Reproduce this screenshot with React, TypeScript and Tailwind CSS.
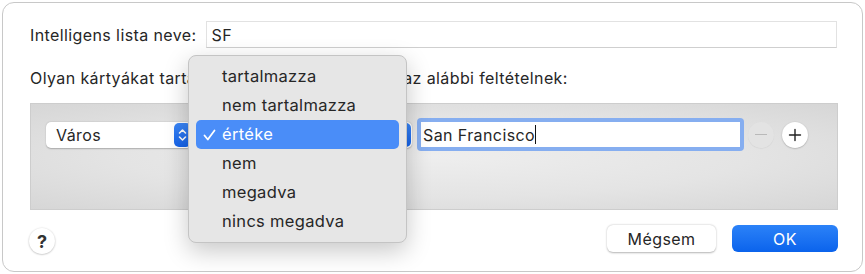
import React from "react";

const menuItems = ["tartalmazza", "nem tartalmazza", "értéke", "nem", "megadva", "nincs megadva"];

function Stepper() {
  return (
    <div className="w-[17px] h-[24px] rounded-[5px] bg-gradient-to-b from-[#3b86f7] to-[#1463ea] flex items-center justify-center">
      <svg width="9" height="14" viewBox="0 0 9 14" fill="none" stroke="white" strokeWidth="1.6" strokeLinecap="round" strokeLinejoin="round">
        <path d="M1.5 5 L4.5 2 L7.5 5" />
        <path d="M1.5 9 L4.5 12 L7.5 9" />
      </svg>
    </div>
  );
}

export default function App() {
  return (
    <div
      className="w-[865px] h-[274px] bg-white p-[2px] text-[#262626] text-[16px] tracking-[0.4px]"
      style={{ fontFamily: "Inter, 'Noto Sans', sans-serif" }}
    >
      <div className="relative h-[270px] rounded-[12px] border border-[#c8c8c8] bg-white pl-[27px] pr-[25px] pt-[18px]">
        {/* name row */}
        <div className="flex items-center">
          <span className="leading-5 mr-[9px]">Intelligens lista neve:</span>
          <div className="flex-1 h-[27px] border border-[#e2e2e2] border-b-[#cfcfcf] bg-white flex items-center px-[5px]">
            SF
          </div>
        </div>

        <p className="mt-[20px] leading-5">
          Olyan kártyákat tart
          <span className="tracking-[-0.08px]">almaz, amelyek megfelelnek </span>
          az alábbi feltételnek:
        </p>

        {/* criteria box */}
        <div className="mt-[15px] h-[107px] mr-[-1px] border border-[#cdcdcd] bg-[radial-gradient(ellipse_at_center,#eeeeee_0%,#e4e4e4_55%,#d6d6d6_100%)] pl-[15px] pt-[14px]">
          <div className="flex items-center">
            <div className="w-[146px] h-[26px] rounded-[5px] bg-white shadow-[0_0.5px_1.5px_rgba(0,0,0,0.25)] flex items-center justify-between pl-[10px] pr-[1px]">
              <span>Város</span>
              <Stepper />
            </div>
            <div className="ml-[6px] w-[214px] h-[26px] rounded-[5px] bg-white shadow-[0_0.5px_1.5px_rgba(0,0,0,0.25)] flex items-center justify-end pr-[1px]">
              <Stepper />
            </div>
            <div className="ml-[5px] w-[327px] h-[33px] rounded-[4px] bg-[#86aef0] p-[4px]">
              <div className="h-full bg-white flex items-center pl-[2px]">
                San Francisco
                <span className="inline-block w-px h-[19px] bg-[#111]" />
              </div>
            </div>
            <div className="ml-[4px] w-[26px] h-[26px] rounded-full bg-[#e3e3e3] shadow-[0_0.5px_1px_rgba(0,0,0,0.08)] flex items-center justify-center">
              <span className="block w-[12px] h-[1.5px] bg-[#b9b9b9]" />
            </div>
            <div className="ml-[8px] w-[26px] h-[26px] rounded-full bg-white shadow-[0_0.5px_1.5px_rgba(0,0,0,0.3)] flex items-center justify-center">
              <svg width="14" height="14" viewBox="0 0 14 14" stroke="#222" strokeWidth="1.4" strokeLinecap="round">
                <path d="M7 1.5 V12.5 M1.5 7 H12.5" />
              </svg>
            </div>
          </div>
        </div>

        {/* bottom buttons */}
        <div className="mt-[13px] flex items-center">
          <div className="ml-[-1px] mt-[5px] w-[26px] h-[26px] rounded-full bg-white shadow-[0_0.5px_2px_rgba(0,0,0,0.3)] flex items-center justify-center text-[18px] font-bold text-[#333] tracking-normal">
            ?
          </div>
          <div className="flex-1" />
          <div className="w-[109px] h-[27px] rounded-[6px] bg-white shadow-[0_0.5px_2px_rgba(0,0,0,0.3)] flex items-center justify-center">
            Mégsem
          </div>
          <div className="ml-[16px] mr-[-1px] w-[106px] h-[27px] rounded-[6px] bg-gradient-to-b from-[#2b82f8] to-[#0a63ec] flex items-center justify-center text-white">
            OK
          </div>
        </div>

        {/* popup menu */}
        <div className="absolute left-[185px] top-[52px] w-[219px] rounded-[8px] border border-[#c4c4c4] bg-[#e6e6e6] shadow-[0_8px_24px_rgba(0,0,0,0.22)] py-[6px] px-[7px] text-[16.5px] tracking-[0.3px]">
          {menuItems.map((item) => {
            const selected = item === "értéke";
            return (
              <div
                key={item}
                className={
                  selected
                    ? "h-[29px] rounded-[5px] bg-[#4a8df8] text-white flex items-center"
                    : "h-[29px] flex items-center"
                }
              >
                <span className="w-[26px] flex justify-center">
                  {selected && (
                    <svg width="13" height="12" viewBox="0 0 13 12" fill="none" stroke="white" strokeWidth="1.8" strokeLinecap="round" strokeLinejoin="round">
                      <path d="M1.5 6.5 L4.8 10.5 L11.5 1.5" />
                    </svg>
                  )}
                </span>
                <span>{item}</span>
              </div>
            );
          })}
        </div>
      </div>
    </div>
  );
}
